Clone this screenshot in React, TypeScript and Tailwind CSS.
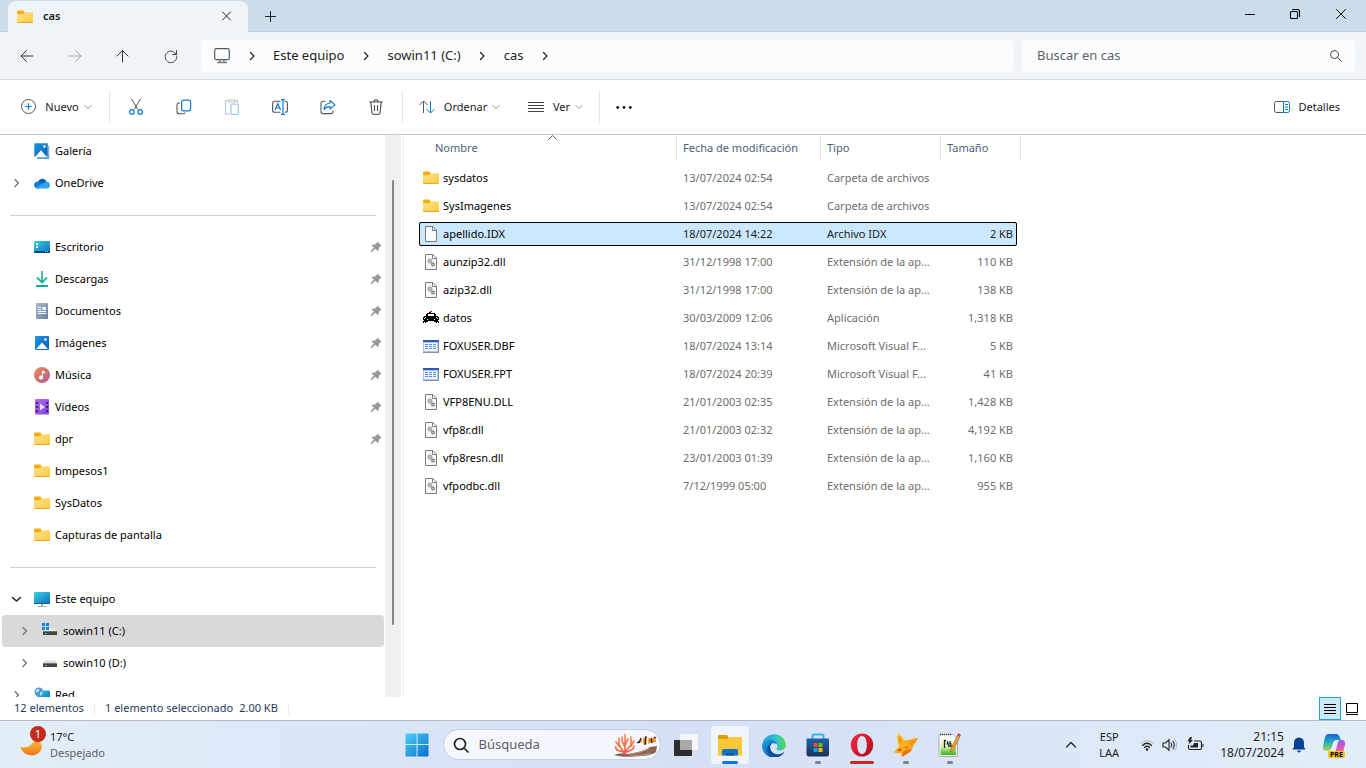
import React, { useState } from 'react';

const files = [
  { name: 'sysdatos', date: '13/07/2024 02:54', type: 'Carpeta de archivos', size: '', icon: 'folder' },
  { name: 'SysImagenes', date: '13/07/2024 02:54', type: 'Carpeta de archivos', size: '', icon: 'folder' },
  { name: 'apellido.IDX', date: '18/07/2024 14:22', type: 'Archivo IDX', size: '2 KB', icon: 'file' },
  { name: 'aunzip32.dll', date: '31/12/1998 17:00', type: 'Extensión de la ap...', size: '110 KB', icon: 'dll' },
  { name: 'azip32.dll', date: '31/12/1998 17:00', type: 'Extensión de la ap...', size: '138 KB', icon: 'dll' },
  { name: 'datos', date: '30/03/2009 12:06', type: 'Aplicación', size: '1,318 KB', icon: 'car' },
  { name: 'FOXUSER.DBF', date: '18/07/2024 13:14', type: 'Microsoft Visual F...', size: '5 KB', icon: 'table' },
  { name: 'FOXUSER.FPT', date: '18/07/2024 20:39', type: 'Microsoft Visual F...', size: '41 KB', icon: 'table' },
  { name: 'VFP8ENU.DLL', date: '21/01/2003 02:35', type: 'Extensión de la ap...', size: '1,428 KB', icon: 'dll' },
  { name: 'vfp8r.dll', date: '21/01/2003 02:32', type: 'Extensión de la ap...', size: '4,192 KB', icon: 'dll' },
  { name: 'vfp8resn.dll', date: '23/01/2003 01:39', type: 'Extensión de la ap...', size: '1,160 KB', icon: 'dll' },
  { name: 'vfpodbc.dll', date: '7/12/1999 05:00', type: 'Extensión de la ap...', size: '955 KB', icon: 'dll' },
];

const quickAccess = [
  { label: 'Escritorio', icon: 'desktop', pinned: true },
  { label: 'Descargas', icon: 'download', pinned: true },
  { label: 'Documentos', icon: 'document', pinned: true },
  { label: 'Imágenes', icon: 'picture', pinned: true },
  { label: 'Música', icon: 'music', pinned: true },
  { label: 'Vídeos', icon: 'video', pinned: true },
  { label: 'dpr', icon: 'folder', pinned: true },
  { label: 'bmpesos1', icon: 'folder', pinned: false },
  { label: 'SysDatos', icon: 'folder', pinned: false },
  { label: 'Capturas de pantalla', icon: 'folder', pinned: false },
];

const icons: Record<string, React.ReactNode> = {
  folder: (
    <>
      <path d="M0 2.5Q0 1.5 1 1.5H6L8 3.5V7H0z" fill="#f2ae0b" />
      <path d="M0 5.2H6L8 3.3H15.2Q16 3.3 16 4.1V13.2Q16 14 15.2 14H.8Q0 14 0 13.2z" fill="url(#gFolder)" />
      <path d="M0 13H16V13.3Q16 14 15.2 14H.8Q0 14 0 13.3z" fill="#e9a820" />
    </>
  ),
  file: <path d="M2.5.5H10L13.5 4V15.5H2.5zM9.5.5V4.5H13.5" fill="#fafafa" stroke="#7b7b7b" />,
  dll: (
    <>
      <path d="M2.5.5H10L13.5 4V15.5H2.5zM9.5.5V4.5H13.5" fill="#fafafa" stroke="#7b7b7b" />
      <circle cx="7" cy="7" r="1.6" fill="#e4e8eb" stroke="#a3abb3" strokeWidth="1.8" />
      <circle cx="10" cy="10.5" r="1.3" fill="#fafafa" stroke="#6f7981" strokeWidth="1.3" />
    </>
  ),
  car: (
    <g shapeRendering="crispEdges">
      <path d="M4 3H12V4H13V6H15V7H16V10H15V11H16V13H13V12H11V11H5V12H3V13H0V11H1V10H0V7H1V6H3V4H4z" fill="#000" />
      <path d="M6 2H8V3H6z" fill="#000" /><path d="M7 1H9V2H7z" fill="#f01010" />
      <path d="M5 4H11V6H5zM2 7H3V8H2zM13 7H14V8H13zM1 8H2V9H1zM14 8H15V9H14zM4 9H5V10H4zM11 9H12V10H11zM1 12H2V13H1zM14 12H15V13H14z" fill="#fff" />
    </g>
  ),
  table: (
    <>
      <path d="M0 2H16V15H0z" fill="#8494b8" />
      <path d="M0 2H15V14H0z" fill="#a9c4f5" />
      <path d="M0 2H16V4H0z" fill="#2d5cb8" />
      <path d="M1 5H14V13H1z" fill="#f7faff" />
      <path d="M2 6.500H5M6 6.500H9M10 6.500H13M2 8.500H5M6 8.500H9M10 8.500H13M2 10.500H5M6 10.500H9M10 10.500H13" stroke="#5b8ae0" />
    </>
  ),
  gallery: (
    <>
      <path d="M3 3H15.2V16H3.8Q3 16 3 15.2z" fill="#5796d2" />
      <path d="M0 .8Q0 0 .8 0H13.2Q14 0 14 .8V14H.8Q0 14 0 13.2z" fill="url(#gBlue)" stroke="#fff" strokeWidth=".5" />
      <path d="M1 14L7 7.2L13 14z" fill="#f3f8fd" />
      <circle cx="10.5" cy="3.5" r="1.3" fill="#fff" />
    </>
  ),
  onedrive: (
    <>
      <path d="M4 6.6A4.7 4.7 0 0 1 12.6 6.4L8.5 9.5z" fill="#0860b4" />
      <path d="M.9 12A3.4 3.4 0 0 1 4 6.5Q5.6 6.5 7 7.5L10 9.3L5 13.5H3.4Q1.8 13.5.9 12z" fill="#0f78d4" />
      <path d="M8.8 8.5L12 6.5Q16 6.9 16 10.2Q15.8 13.5 12.4 13.5H3.6Q2.2 13.4 1.2 12.4z" fill="#2da4e8" />
    </>
  ),
  desktop: (
    <>
      <rect y="2" width="16" height="12" rx="1" fill="url(#gCyan)" />
      <path d="M2 4H4V6H2zM2 7H4V9H2z" fill="#e8fbff" />
      <path d="M0 12H16V13Q16 14 15 14H1Q0 14 0 13z" fill="#0b4877" />
      <path d="M11 12.5H12M13 12.5H14" stroke="#5ee5f4" />
    </>
  ),
  download: (
    <path d="M8 0V11M3 6.5L8 11.5L13 6.5M2 15H14" fill="none" stroke="url(#gGreen)" strokeWidth="1.8" />
  ),
  document: (
    <>
      <rect x="2" width="12" height="16" rx="1" fill="url(#gDoc)" />
      <path d="M4 4.5H7M4 6.5H7M4 8.5H12M4 10.5H12" stroke="#fff" />
      <path d="M8.5 4H12V7H8.5z" fill="#fff" />
    </>
  ),
  picture: (
    <>
      <rect x="1" y="1" width="14" height="14" rx="1" fill="url(#gBlue)" />
      <path d="M2 14L8 7.5L14 14z" fill="#f3f8fd" />
      <circle cx="11.5" cy="4.5" r="1.3" fill="#fff" />
    </>
  ),
  music: (
    <>
      <circle cx="8" cy="8" r="8" fill="url(#gMusic)" />
      <path d="M8 3.5L11 4.8V6.6L9 5.8V10.5A2 2 0 1 1 8 8.8z" fill="#fff" />
    </>
  ),
  video: (
    <>
      <rect x="1" width="14" height="15.5" rx="1" fill="url(#gVideo)" />
      <path d="M2 3H4V5H2zM2 7H4V9H2zM2 11H4V13H2zM12 3H14V5H12zM12 7H14V9H12zM12 11H14V13H12z" fill="#46217f" />
      <path d="M6 4.5L11 8L6 11.5z" fill="#eadcff" />
    </>
  ),
  computer: (
    <>
      <rect y="1" width="16" height="12" rx="1" fill="url(#gCyan)" />
      <path d="M0 12H16V12.4Q16 13 15.4 13H.6Q0 13 0 12.4z" fill="#0d5c9f" />
      <path d="M7 13H9V15H12V16H4V15H7z" fill="#a4adb5" />
    </>
  ),
  driveC: (
    <>
      <path d="M3 5H12.5L15 8.5H1z" fill="#e9e9e9" />
      <path d="M0 0H3V3H0zM4 0H7V3H4zM0 4H3V7H0zM4 4H7V7H4z" fill="#0f84dd" />
      <path d="M1 8.3H15V12H1z" fill="#414446" />
      <path d="M3 10H5V11H3z" fill="#4dde5b" />
    </>
  ),
  driveD: (
    <>
      <path d="M3 5.5H13L15 8.5H1z" fill="#dcdcdc" />
      <path d="M1 8.3H15V12H1z" fill="#414446" />
      <path d="M3 10H5V11H3z" fill="#4dde5b" />
    </>
  ),
  network: (
    <>
      <rect x="3" y="3.5" width="13" height="10" rx="1" fill="url(#gCyan)" />
      <circle cx="5" cy="5" r="4.5" fill="#4b9cd0" />
      <path d="M2 3Q4 1 5.5 3Q4 5.5 2.2 5.5zM6 5.5Q8.5 5 9 3Q9 7 6.5 9z" fill="#c4e6f6" />
    </>
  ),
  monitor: (
    <>
      <rect x=".7" y=".7" width="14.6" height="11" rx="1.8" fill="none" stroke="#55595c" strokeWidth="1.2" />
      <path d="M3 14.5H13M6 12V14.500M10 12V14.500" stroke="#777b7e" strokeWidth="1.4" />
    </>
  ),
};

function Icon({ name, className = 'size-4' }: { name: string; className?: string }) {
  return (
    <svg viewBox="0 0 16 16" className={`${className} shrink-0`} aria-hidden="true">
      {icons[name]}
    </svg>
  );
}

// gradients shared by every icon
function Gradients() {
  return (
    <svg className="absolute size-0" aria-hidden="true">
      <defs>
        <linearGradient id="gFolder" x1="0" y1="0" x2="1" y2="1"><stop stopColor="#ffe394" /><stop offset="1" stopColor="#fdc93c" /></linearGradient>
        <linearGradient id="gBlue" x1="0" y1="0" x2="1" y2="1"><stop stopColor="#1a9ae4" /><stop offset="1" stopColor="#0c5bb0" /></linearGradient>
        <linearGradient id="gCyan" x1="0" y1="0" x2="1" y2="1"><stop stopColor="#35d3e4" /><stop offset="1" stopColor="#0f6cbe" /></linearGradient>
        <linearGradient id="gGreen" gradientUnits="userSpaceOnUse" x1="0" y1="0" x2="0" y2="16"><stop stopColor="#35c58c" /><stop offset="1" stopColor="#12a698" /></linearGradient>
        <linearGradient id="gDoc" x1="0" y1="0" x2="1" y2="1"><stop stopColor="#a9bed6" /><stop offset="1" stopColor="#62809f" /></linearGradient>
        <linearGradient id="gMusic" x1="0" y1="0" x2="1" y2="1"><stop stopColor="#f08c4f" /><stop offset="1" stopColor="#b05a9e" /></linearGradient>
        <linearGradient id="gVideo" x1="0" y1="0" x2="1" y2="1"><stop stopColor="#b06cf2" /><stop offset="1" stopColor="#8142d8" /></linearGradient>
        <linearGradient id="gWin" x1="0" y1="0" x2="1" y2="1"><stop stopColor="#4fd0fa" /><stop offset="1" stopColor="#0470cf" /></linearGradient>
        <linearGradient id="gMoon" x1="0" y1="0" x2="0" y2="1"><stop stopColor="#fbc336" /><stop offset="1" stopColor="#ee7a1c" /></linearGradient>
        <linearGradient id="gEdge" x1="0" y1="0" x2="1" y2="0"><stop stopColor="#1b9de2" /><stop offset=".6" stopColor="#2fc4c8" /><stop offset="1" stopColor="#5bd650" /></linearGradient>
        <linearGradient id="gEdge2" x1="0" y1="0" x2="1" y2="1"><stop stopColor="#1da0e6" /><stop offset="1" stopColor="#0c4a94" /></linearGradient>
        <linearGradient id="gStore" x1="0" y1="0" x2="0" y2="1"><stop stopColor="#1e64a8" /><stop offset="1" stopColor="#1c3154" /></linearGradient>
        <linearGradient id="gOpera" x1="0" y1="0" x2="1" y2="1"><stop stopColor="#ff2b3f" /><stop offset="1" stopColor="#a70e1d" /></linearGradient>
        <linearGradient id="gFox" x1="0" y1="0" x2="1" y2="1"><stop stopColor="#fbd21e" /><stop offset="1" stopColor="#f08a1d" /></linearGradient>
        <linearGradient id="gNpp" x1="0" y1="0" x2="0" y2="1"><stop stopColor="#fff" /><stop offset=".5" stopColor="#d5f2a5" /><stop offset="1" stopColor="#35b51d" /></linearGradient>
        <linearGradient id="gCoral" gradientUnits="userSpaceOnUse" x1="0" y1="0" x2="0" y2="24"><stop stopColor="#ff9660" /><stop offset="1" stopColor="#ee5240" /></linearGradient>
        <linearGradient id="gCop1" x1="0" y1="0" x2="0" y2="1"><stop stopColor="#1c62d8" /><stop offset=".5" stopColor="#23aebd" /><stop offset="1" stopColor="#b6d53c" /></linearGradient>
        <linearGradient id="gCop2" x1="0" y1="0" x2="0" y2="1"><stop stopColor="#9a5be8" /><stop offset=".5" stopColor="#d857c4" /><stop offset="1" stopColor="#f9765b" /></linearGradient>
      </defs>
    </svg>
  );
}

function Line({ d, className = 'size-4', color = '#333', width = 1 }: { d: string; className?: string; color?: string; width?: number }) {
  return (
    <svg viewBox="0 0 16 16" className={`${className} shrink-0`} fill="none" stroke={color} strokeWidth={width} strokeLinecap="round" strokeLinejoin="round" aria-hidden="true">
      <path d={d} />
    </svg>
  );
}

const chevronRight = 'M6.5 4.5L10 8L6.5 11.5';
const chevronDown = 'M5 6.5L8 9.5L11 6.5';

function Pin() {
  return (
    <svg viewBox="0 0 12 12" className="size-3 shrink-0" aria-hidden="true">
      <path d="M7.4 1L11.2 4.6L9.6 5.6L8.4 7.6L8.1 9.8L5.2 7.6L1.6 10.9L1 10.5L4 6.5L1.9 4.4L4.8 3.8L6.6 2.4z" fill="#8d989f" stroke="#8d989f" strokeWidth=".6" />
    </svg>
  );
}

function TitleBar() {
  return (
    <header className="flex h-8 shrink-0 border-b border-[#bdd0df] bg-[#cbddea]">
      <div className="ml-2 mt-px flex h-[31px] w-60 items-center rounded-t-lg bg-[#eff4f9] pl-[9px] pr-[13px]">
        <Icon name="folder" />
        <span className="ml-2.5 flex-1 text-[11px] font-semibold text-[#1a1a1a]">cas</span>
        <button aria-label="Cerrar pestaña"><Line d="M3.5 3L11.5 11M11.5 3L3.5 11" color="#222" /></button>
      </div>
      <button aria-label="Nueva pestaña" className="ml-3.5"><Line d="M3.5 8.500H13.500M8.500 3.500V13.500" color="#222" /></button>
      <div className="ml-auto flex pr-px">
        <button aria-label="Minimizar" className="flex w-[46px] items-center justify-center pb-1"><Line d="M3.5 8.5H12.5" color="#000" /></button>
        <button aria-label="Restaurar" className="flex w-[46px] items-center justify-center pb-1"><Line d="M3.5 5.5H8.5Q9.5 5.5 9.5 6.5V11.5Q9.5 12.500 8.5 12.500H3.5Q2.5 12.500 2.5 11.500V6.5Q2.5 5.5 3.5 5.5M4.5 3.5H9.5Q11.5 3.5 11.5 5.5V10.5" color="#000" width={1.1} /></button>
        <button aria-label="Cerrar" className="flex w-[46px] items-center justify-center pb-1 pr-0.5"><Line d="M3.5 3.5L12.5 12.5M12.5 3.5L3.5 12.5" color="#000" /></button>
      </div>
    </header>
  );
}

function NavBar() {
  const path = ['Este equipo', 'sowin11 (C:)', 'cas'];
  return (
    <nav className="flex h-12 shrink-0 items-center border-b border-[#cfd8df] bg-[#eff4f9] pl-[3px] pr-[11px]">
      <button aria-label="Atrás" className="flex w-12 justify-center"><Line d="M2 8H14M7.5 2.5L2 8L7.5 13.5" /></button>
      <button aria-label="Adelante" disabled className="flex w-12 justify-center"><Line d="M2 8H14M8.5 2.5L14 8L8.5 13.5" color="#a9adb1" /></button>
      <button aria-label="Subir" className="flex w-12 justify-center"><Line d="M7.500 14V2.5M2 8L7.500 2.5L13 8" /></button>
      <button aria-label="Actualizar" className="flex w-12 justify-center"><Line d="M13.5 7A5.8 5.8 0 1 0 13.8 8.5M13.5 2.5V6.5H9.5" color="#444" /></button>
      <div className="ml-1.5 flex h-8 flex-1 items-center rounded bg-[#fbfcfe] pl-[13px]">
        <Icon name="monitor" />
        {path.map((p) => (
          <React.Fragment key={p}>
            <span className="flex w-[43px] justify-center"><Line d={chevronRight} color="#222" width={1.2} /></span>
            <a href="#" className="text-[13px] text-[#1f1f1f]">{p}</a>
          </React.Fragment>
        ))}
        <span className="flex w-[43px] justify-center"><Line d={chevronRight} color="#222" width={1.2} /></span>
      </div>
      <label className="ml-2 flex h-8 w-[333px] items-center rounded bg-[#fbfcfe] pl-[15px] pr-[11px]">
        <input type="search" aria-label="Buscar en cas" placeholder="Buscar en cas" className="min-w-0 flex-1 text-[13px] outline-none placeholder:text-[#5f6265]" />
        <Line d="M10.5 6.5A4 4 0 1 1 2.5 6.5A4 4 0 1 1 10.5 6.5M9.5 9.5L13.5 13.5" color="#444" />
      </label>
    </nav>
  );
}

function Toolbar() {
  return (
    <div className="flex h-[55px] shrink-0 items-center border-b border-[#bccad6] bg-white pr-[26px] text-[11px] text-[#1a1a1a]">
      <button className="flex w-[109px] items-center pl-5">
        <svg viewBox="0 0 16 16" className="size-4" fill="none" aria-hidden="true">
          <circle cx="8.500" cy="7.500" r="7" stroke="#555" /><path d="M5.300 7.500H11.700M8.500 4.300V10.700" stroke="#0f78d4" strokeWidth="1.2" />
        </svg>
        <span className="ml-2 w-9">Nuevo</span>
        <Line d={chevronDown} color="#999" />
      </button>
      <span className="h-8 w-px bg-[#e8e8e8]" />
      <div className="flex w-[292px] pl-0.5">
        <button aria-label="Cortar" className="flex w-12 justify-center">
          <svg viewBox="0 0 16 16" className="size-4" fill="none" aria-hidden="true">
            <path d="M3.5 0L9.8 10.5M12.5 0L6.2 10.5" stroke="#555" />
            <circle cx="3.8" cy="13" r="2.3" stroke="#0f78d4" strokeWidth="1.2" /><circle cx="12.2" cy="13" r="2.3" stroke="#0f78d4" strokeWidth="1.2" />
          </svg>
        </button>
        <button aria-label="Copiar" className="flex w-12 justify-center">
          <svg viewBox="0 0 16 16" className="size-4" fill="none" aria-hidden="true">
            <path d="M4 4H2.8Q1 4 1 5.8V12.5Q1 14.8 3.2 14.8H7Q8.8 14.8 8.8 13.4" stroke="#555" strokeWidth="1.1" />
            <rect x="5.6" y="1.2" width="9" height="10.6" rx="2" stroke="#0f78d4" strokeWidth="1.2" />
          </svg>
        </button>
        <button aria-label="Pegar" disabled className="flex w-12 justify-center">
          <svg viewBox="0 0 16 16" className="size-4" fill="none" aria-hidden="true">
            <path d="M5 1.5H1.5V15H6M11 1.5H13.5V4M5 1H11V3H5z" stroke="#c4c4c4" strokeWidth="1.1" />
            <rect x="7" y="5.2" width="7.4" height="10.2" rx="1" stroke="#9fcbee" strokeWidth="1.2" />
          </svg>
        </button>
        <button aria-label="Cambiar nombre" className="flex w-12 justify-center">
          <svg viewBox="0 0 16 16" className="size-4" fill="none" aria-hidden="true">
            <path d="M8.5 2.3H2.6Q.6 2.3.6 4.3V11.3Q.6 13.3 2.6 13.3H8.5M13 2.3Q15.4 2.3 15.4 4.3V11.3Q15.4 13.3 13 13.3" stroke="#555" strokeWidth="1.1" />
            <path d="M3 11L5.8 4.5L8.6 11M4 9H7.6M9 .6H13M11 .6V15.4M9 15.4H13" stroke="#0f78d4" strokeWidth="1.2" />
          </svg>
        </button>
        <button aria-label="Compartir" className="flex w-12 justify-center">
          <svg viewBox="0 0 16 16" className="size-4" fill="none" aria-hidden="true">
            <path d="M5.5 2.2H3.2Q1 2.2 1 4.4V12.4Q1 14.6 3.2 14.6H10.8Q13 14.6 13 12.4V11.5" stroke="#555" strokeWidth="1.1" />
            <path d="M10 1.5L15 5.8L10 10V7.6Q6 7.5 4 10.6Q4.6 4.5 10 4z" stroke="#0f78d4" strokeWidth="1.1" strokeLinejoin="round" />
          </svg>
        </button>
        <button aria-label="Eliminar" className="flex w-12 justify-center">
          <Line d="M1.5 3H14.5M6 3Q6 .8 8 .8Q10 .8 10 3M2.8 3L4 14Q4.2 15.2 5.4 15.2H10.6Q11.8 15.2 12 14L13.2 3M6.5 6.5V11.5M9.5 6.5V11.5" color="#444" width={1.1} />
        </button>
      </div>
      <span className="h-8 w-px bg-[#e8e8e8]" />
      <button className="ml-4 flex items-center">
        <svg viewBox="0 0 16 16" className="size-4" fill="none" aria-hidden="true">
          <path d="M4.5 14V2M.5 6L4.5 2L8.5 6" stroke="#555" /><path d="M11.5 2V14M7.5 10L11.5 14L15.5 10" stroke="#0f78d4" />
        </svg>
        <span className="ml-2 w-[45px]">Ordenar</span>
        <Line d={chevronDown} color="#999" />
      </button>
      <button className="ml-6 flex items-center">
        <svg viewBox="0 0 16 16" className="size-4" stroke="#444" aria-hidden="true"><path d="M0 3.5H16M0 6.5H16M0 9.5H16M0 12.5H16" /></svg>
        <span className="ml-2 w-[19px]">Ver</span>
        <Line d={chevronDown} color="#999" />
      </button>
      <span className="ml-3 h-8 w-px bg-[#e8e8e8]" />
      <button aria-label="Ver más" className="ml-4">
        <svg viewBox="0 0 16 16" className="size-4" fill="#1a1a1a" aria-hidden="true"><circle cx="1.7" cy="8.5" r="1.4" /><circle cx="8" cy="8.5" r="1.4" /><circle cx="14.3" cy="8.5" r="1.4" /></svg>
      </button>
      <button className="ml-auto flex items-center gap-2">
        <svg viewBox="0 0 16 16" className="size-4" fill="none" aria-hidden="true">
          <path d="M9 2.5H2.5Q.5 2.5.5 4.5V11.5Q.5 13.5 2.5 13.5H9" stroke="#555" />
          <path d="M9.5 2.5H13.5Q15.5 2.5 15.5 4.5V11.5Q15.5 13.5 13.5 13.5H9.5zM11 5.5H14M11 8H14M11 10.5H14" stroke="#0f78d4" />
        </svg>
        Detalles
      </button>
    </div>
  );
}

type NavItemProps = { label: string; icon: string; pinned?: boolean; expand?: 'closed' | 'open'; nested?: boolean; active?: boolean };

function NavItem({ label, icon, pinned, expand, nested, active }: NavItemProps) {
  return (
    <li>
      <a href="#" className={`ml-0.5 mr-px flex h-8 items-center rounded-sm pr-0.5 ${nested ? 'pl-3.5' : 'pl-1.5'} ${active ? 'bg-[#d9d9d9]' : ''}`}>
        <span className="w-[26px]">
          {expand === 'closed' && <Line d="M7 4.500L10.500 8L7 11.500" color="#777" width={1.4} />}
          {expand === 'open' && <Line d="M4.5 6.5L8.500 10L12.500 6.5" color="#222" width={1.5} />}
        </span>
        <Icon name={icon} />
        <span className="ml-[5px] flex-1">{label}</span>
        {pinned && <Pin />}
      </a>
    </li>
  );
}

function Sidebar() {
  return (
    <aside className="flex w-[401px] shrink-0 overflow-hidden text-[11px] text-black">
      <ul className="min-w-0 flex-1">
        <NavItem label="Galería" icon="gallery" />
        <NavItem label="OneDrive" icon="onedrive" expand="closed" />
        <li className="flex h-8 items-center pl-2.5 pr-[9px]"><hr className="w-full border-[#d2d2d2]" /></li>
        {quickAccess.map((item) => (
          <NavItem key={item.label} {...item} />
        ))}
        <li className="flex h-8 items-center pl-2.5 pr-[9px]"><hr className="w-full border-[#d2d2d2]" /></li>
        <NavItem label="Este equipo" icon="computer" expand="open" />
        <NavItem label="sowin11 (C:)" icon="driveC" expand="closed" nested active />
        <NavItem label="sowin10 (D:)" icon="driveD" expand="closed" nested />
        <NavItem label="Red" icon="network" expand="closed" />
      </ul>
      <div className="flex w-4 justify-center bg-[#f0f0f0] pb-[72px] pt-[45px]">
        <div className="w-0.5 rounded bg-[#868686]" />
      </div>
    </aside>
  );
}

function FileList() {
  const [selected, setSelected] = useState('apellido.IDX');
  const handle = 'absolute -top-1 h-[25px] w-px bg-[#e2e2e2]';

  return (
    <main className="ml-0.5 min-w-0 flex-1 overflow-hidden border-l border-[#f3f3f3] pl-[15px]">
      <table className="w-[598px] table-fixed border-separate border-spacing-x-0 border-spacing-y-1 text-[11px] text-[#6d6d6d]">
        <thead>
          <tr className="h-[23px] text-left align-top leading-[18px] text-[#4c607a]">
            <th className="relative w-[257px] p-0 pl-4 font-normal">
              Nombre
              <svg viewBox="0 0 9 5" className="absolute left-[129px] -top-1 h-[5px] w-[9px]" fill="none" stroke="#666" aria-hidden="true"><path d="M.5 4.5L4.5.5L8.5 4.5" /></svg>
            </th>
            <th className="relative w-36 p-0 pl-[7px] font-normal"><span className={`${handle} left-0`} />Fecha de modificación</th>
            <th className="relative w-[120px] p-0 pl-[7px] font-normal"><span className={`${handle} left-0`} />Tipo</th>
            <th className="relative p-0 pl-[7px] font-normal"><span className={`${handle} left-0`} />Tamaño<span className={`${handle} -right-1`} /></th>
          </tr>
        </thead>
        <tbody>
          {files.map((f) => {
            const active = f.name === selected;
            return (
              <tr
                key={f.name}
                onClick={() => setSelected(f.name)}
                className={`h-6 ${active ? 'rounded-xs bg-[#cce8ff] text-[#222] outline outline-black -outline-offset-1' : ''}`}
              >
                <td className="p-0 pl-1 text-black">
                  <span className="flex items-center gap-1"><Icon name={f.icon} />{f.name}</span>
                </td>
                <td className="p-0 pl-[7px]">{f.date}</td>
                <td className="p-0 pl-[7px]">{f.type}</td>
                <td className="p-0 pr-1 text-right">{f.size}</td>
              </tr>
            );
          })}
        </tbody>
      </table>
    </main>
  );
}

function StatusBar() {
  return (
    <footer className="flex h-[23px] shrink-0 items-center bg-white pl-3.5 pr-2 text-[11px] text-[#1e395b]">
      <span className="w-20">12 elementos</span>
      <span className="h-3 w-px bg-[#ececec]" />
      <span className="ml-2.5">1 elemento seleccionado</span>
      <span className="ml-1.5">2.00 KB</span>
      <span className="ml-2.5 h-3 w-px bg-[#ececec]" />
      <button aria-label="Detalles" className="ml-auto flex h-[23px] w-[22px] items-center justify-center border border-[#26a0da] bg-[#cde8f6]">
        <svg viewBox="0 0 12 12" className="size-3" stroke="#000" aria-hidden="true"><path d="M0 1.5H12M0 4.5H12M0 7.5H12M0 10.5H12" /></svg>
      </button>
      <button aria-label="Iconos grandes" className="ml-[5px]">
        <svg viewBox="0 0 12 12" className="size-3" fill="none" stroke="#000" aria-hidden="true"><path d="M.5.5H11.5V9.5H.5zM0 11.5H12" /></svg>
      </button>
    </footer>
  );
}

const apps = [
  {
    name: 'Vista de tareas',
    mark: '',
    art: (
      <>
        <rect x="0" y="7" width="18" height="16" rx="1" fill="#2c2c2c" />
        <rect x="6" y="1" width="18" height="16" rx="1" fill="#f6f6f6" />
        <path d="M6 7H18V17H6z" fill="#a9a9a9" />
      </>
    ),
  },
  {
    name: 'Explorador de archivos',
    mark: 'w-4 bg-[#0a78d6]',
    art: (
      <>
        <path d="M0 3Q0 2 1 2H9L11 5V8H0z" fill="#dd9c08" />
        <path d="M0 6H9L11 4H23Q24 4 24 5V22.500H0z" fill="#fdc73a" />
        <path d="M4 22.500V18Q4 16 6 16H18Q20 16 20 18V22.500z" fill="#1473c6" />
        <path d="M8 20H16V22.500H8z" fill="#0f599f" />
      </>
    ),
  },
  {
    name: 'Edge',
    mark: '',
    art: (
      <>
        <path d="M1 9A12 12 0 0 1 24 11Q24 17 18 17.5Q14 17.5 14.5 15.5Q16 14 15 11.5Q12 6 5 9Q1 11 0 14Q0 11 1 9z" fill="url(#gEdge)" />
        <path d="M0 13Q1.5 7 8 6.8Q13.5 7 15 11Q9 8.5 8 14Q8 20 15 21.5Q18.5 22 22 19.5A12 12 0 0 1 0 13z" fill="url(#gEdge2)" />
        <path d="M8 14Q8 20 15 21.5Q19 22 22.4 18.5Q20 24 13 24Q5 23 5 16Q5.4 12 9.5 10.6Q8 12 8 14z" fill="#0d4f9c" />
      </>
    ),
  },
  {
    name: 'Microsoft Store',
    mark: 'w-1.5 bg-[#7b8290]',
    art: (
      <>
        <path d="M6.5 6V3Q6.5 1.5 8 1.5H16Q17.5 1.5 17.5 3V6" fill="none" stroke="#35b5ee" strokeWidth="2" />
        <path d="M.5 5.500H23V21Q23 23.500 20.500 23.500H3Q.5 23.500.5 21z" fill="url(#gStore)" />
        <path d="M7.5 10H11.5V14H7.5z" fill="#f25022" /><path d="M12.5 10H16.5V14H12.5z" fill="#7fba00" />
        <path d="M7.5 15H11.5V19H7.5z" fill="#00a4ef" /><path d="M12.5 15H16.5V19H12.5z" fill="#ffb900" />
      </>
    ),
  },
  {
    name: 'Opera',
    mark: 'w-6 bg-[#c42b1c]',
    art: (
      <path fillRule="evenodd" d="M12 .5A11.2 11.5 0 1 1 12 23.5A11.2 11.5 0 1 1 12 .5zM12 3C8.500 3 7.200 7.500 7.200 12C7.200 16.500 8.500 21 12 21C15.500 21 16.800 16.500 16.800 12C16.800 7.500 15.500 3 12 3z" fill="url(#gOpera)" />
    ),
  },
  {
    name: 'Visual FoxPro',
    mark: 'w-1.5 bg-[#7b8290]',
    art: (
      <>
        <path d="M4 0Q8.500 3 10 7Q13 7.500 16 6.500L24 4.500Q22.500 10 19 13Q18 19 14 20L8 24L7 20Q1 21 0 19L5 13Q2 6 4 0z" fill="url(#gFox)" />
        <path d="M5 2.500Q8 5 8.500 9L6 11Q4 6 5 2.500zM15 9.500L22 6.500Q20 11 17 12.500z" fill="#f4901d" />
        <path d="M3 17L7 15L8 17L5 18.500zM11 14L14 13L12 16z" fill="#d9500e" />
        <path d="M8 24L9 19L13 17L17 16Q16 20 13 20.500z" fill="#ec6d14" />
      </>
    ),
  },
  {
    name: 'Notepad++',
    mark: 'w-1.5 bg-[#7b8290]',
    art: (
      <>
        <path d="M1 1.500H15L19.500 6V23.500H1z" fill="#fbfbfb" stroke="#a9aba9" />
        <path d="M2.500 5H18V22H2.500z" fill="url(#gNpp)" />
        <path d="M2 1.500H14" stroke="#444" strokeWidth="1.500" strokeDasharray="1 1" />
        <path d="M6 7.500H8M6.500 7V15M9.500 8V11H11M12 8V11H13.500M10 13H16" stroke="#222" strokeWidth="1.300" fill="none" />
        <path d="M20.500.5L22.500 2L15.500 17L12.500 19L13 15.500z" fill="#e9a13b" stroke="#9a5f22" strokeWidth=".6" />
        <path d="M20.500.5L22.500 2L21.500 4L19.500 2.500z" fill="#c4473a" />
      </>
    ),
  },
];

function Taskbar() {
  return (
    <div className="grid h-12 shrink-0 grid-cols-[1fr_auto_1fr] border-t border-[#b3bac6] bg-linear-to-r from-[#e3eef7] via-[#d5dff6] to-[#e2eef8] text-[#1c1c1c]">
      <button className="flex items-center pl-5 text-left text-[11px] leading-4">
        <span className="relative mr-1.5 size-6">
          <svg viewBox="0 0 24 24" className="size-6" aria-hidden="true"><path d="M0 14Q10 17 16 5Q24 11 21 17Q17 24 9 22Q3 21 0 14z" fill="url(#gMoon)" /></svg>
          <span className="absolute -top-[7px] left-2.5 flex size-4 items-center justify-center rounded-full bg-[#c42b1c] text-[11px] text-white">1</span>
        </span>
        <span>17°C<br /><span className="text-[#5d6166]">Despejado</span></span>
      </button>

      <div className="flex items-center">
        <button aria-label="Inicio" className="flex w-11 justify-center">
          <svg viewBox="0 0 24 24" className="size-6" aria-hidden="true"><path d="M1.500.5H11.500V11H.5V1.500Q.5.5 1.500.5zM12.500.5H22.500Q23.500.5 23.500 1.500V11H12.500zM.5 12H11.500V23.500H1.500Q.5 23.500.5 22.500zM12.500 12H23.500V22.500Q23.500 23.500 22.500 23.500H12.500z" fill="url(#gWin)" /></svg>
        </button>
        <label className="ml-1 mr-[3px] flex h-[31px] w-[218px] items-center rounded-full border border-[#c3cfe2] bg-[#f4f7fd] pl-[9px] pr-0.5">
          <Line d="M12.500 7A5.500 5.500 0 1 1 1.500 7A5.500 5.500 0 1 1 12.500 7M11 11L15 15" color="#222" width={1.7} />
          <input type="search" aria-label="Búsqueda" placeholder="Búsqueda" className="ml-2.5 min-w-0 flex-1 text-[13px] outline-none placeholder:text-[#5c5f63]" />
          <svg viewBox="0 0 44 24" className="h-6 w-11" fill="none" aria-hidden="true">
            <path d="M0 22Q6 19 14 21L24 19Q32 17 36 14L43 13L42 19Q38 22 28 23Q8 25 0 22z" fill="#8b6453" />
            <path d="M15 21.500Q26 20 35 16M18 23Q28 23 36 20" stroke="#bf977e" />
            <path d="M11 21V1.500M11 21L5 12V5M5 13L2 9M3 17L1.500 14M11 14L8 8V4M11 19L17 12V4M17 13L20 8M11 12L14 6M9 19L3 17M13 19L19 16L20 13" stroke="url(#gCoral)" strokeWidth="1.700" strokeLinecap="round" />
            <path d="M25 7Q30 2 37 6L41 4L42 9L37 9.500Q31 13 26 9z" fill="#f08c1e" />
            <path d="M26 8L23 10M27 5L25 10M32 3L31 12M37 5L38 10M40 4L42 5" stroke="#2b2420" strokeWidth="1.300" />
            <path d="M28.500 4.500V10.500M33.500 4.500V11" stroke="#fff" strokeWidth="1.500" />
          </svg>
        </label>
        {apps.map((app) => (
          <button key={app.name} aria-label={app.name} className="flex w-11 justify-center">
            <span className={`relative flex h-[38px] w-[38px] items-center justify-center rounded ${app.name === 'Explorador de archivos' ? 'bg-[#f0f4fc]' : ''}`}>
              <svg viewBox="0 0 24 24" className="size-6" aria-hidden="true">{app.art}</svg>
              {app.mark && <span className={`absolute bottom-0 h-[3px] rounded-full ${app.mark}`} />}
            </span>
          </button>
        ))}
      </div>

      <div className="flex items-center justify-end pr-5 text-[11px] leading-4">
        <button aria-label="Mostrar iconos ocultos" className="mr-5"><Line d="M3.500 10L8 5.500L12.500 10" color="#222" width={1.300} /></button>
        <button className="mr-5 text-center">ESP<br />LAA</button>
        <button aria-label="Red, volumen y batería" className="mr-4 flex items-center gap-[7px]">
          <svg viewBox="0 0 16 16" className="size-4" fill="none" strokeLinecap="round" aria-hidden="true">
            <path d="M1.500 6.500Q8 .5 14.500 6.500" stroke="#b5b9c0" /><path d="M3.500 8.500Q8 4 12.500 8.500M5.500 10.500Q8 8 10.500 10.500" stroke="#222" strokeWidth="1.200" /><circle cx="8" cy="12.500" r="1.300" fill="#222" />
          </svg>
          <svg viewBox="0 0 16 16" className="size-4" fill="none" stroke="#222" strokeLinecap="round" aria-hidden="true">
            <path d="M1 6H3.500L7 2.800V13.200L3.500 10H1zM9 6Q10.500 8 9 10M11 4.200Q13.500 8 11 11.800" strokeWidth="1.100" /><path d="M13 2.500Q16.500 8 13 13.500" stroke="#b5b9c0" />
          </svg>
          <svg viewBox="0 0 17 16" className="ml-0.5 h-4 w-[17px]" aria-hidden="true">
            <path d="M7 4H13Q14.500 4 14.500 5.500V11Q14.500 12.500 13 12.500H3Q1.500 12.500 1.500 11V8" fill="none" stroke="#222" strokeWidth="1.200" />
            <path d="M7 6H11V10.500H3.500V8.500H6zM15.500 7H16.500V10H15.500z" fill="#222" /><path d="M3 0L.5 4.500H2.500L1.500 7.500L6 3H4L5 0z" fill="#222" />
          </svg>
        </button>
        <button className="mr-2 text-right text-xs leading-4">21:15<br />18/07/2024</button>
        <button aria-label="Notificaciones" className="mr-4">
          <svg viewBox="0 0 14 16" className="h-4 w-3.5" fill="#0a3f96" aria-hidden="true"><path d="M7 .5Q12 .8 12 6V10L13.500 12.500H.5L2 10V6Q2 .8 7 .5zM5 13.500H9Q8.500 15.500 7 15.500Q5.500 15.500 5 13.500z" /></svg>
        </button>
        <button aria-label="Copilot" className="relative flex">
          <svg viewBox="0 0 24 24" className="size-6" aria-hidden="true">
            <path d="M6 1H14Q17 1 18 5L19 7H14Q12 7 11 10L9 16Q8 18 5 18Q0 18 1 13L3 4Q4 1 6 1z" fill="url(#gCop1)" />
            <path d="M18 7H20Q24 7.500 23 12L21 19Q20 22 17 22H10Q13 21 14 17L16 9Q16.500 7 18 7z" fill="url(#gCop2)" />
          </svg>
          <span className="absolute -bottom-px left-1.5 rounded-xs bg-[#fcc30b] px-0.5 text-[7px] font-bold leading-[7px] text-black">PRE</span>
        </button>
      </div>
    </div>
  );
}

export default function App() {
  return (
    <div className="flex h-screen flex-col overflow-hidden bg-white font-['Noto_Sans','Open_Sans',sans-serif]">
      <Gradients />
      <TitleBar />
      <NavBar />
      <Toolbar />
      <div className="flex min-h-0 flex-1">
        <Sidebar />
        <FileList />
      </div>
      <StatusBar />
      <Taskbar />
    </div>
  );
}
